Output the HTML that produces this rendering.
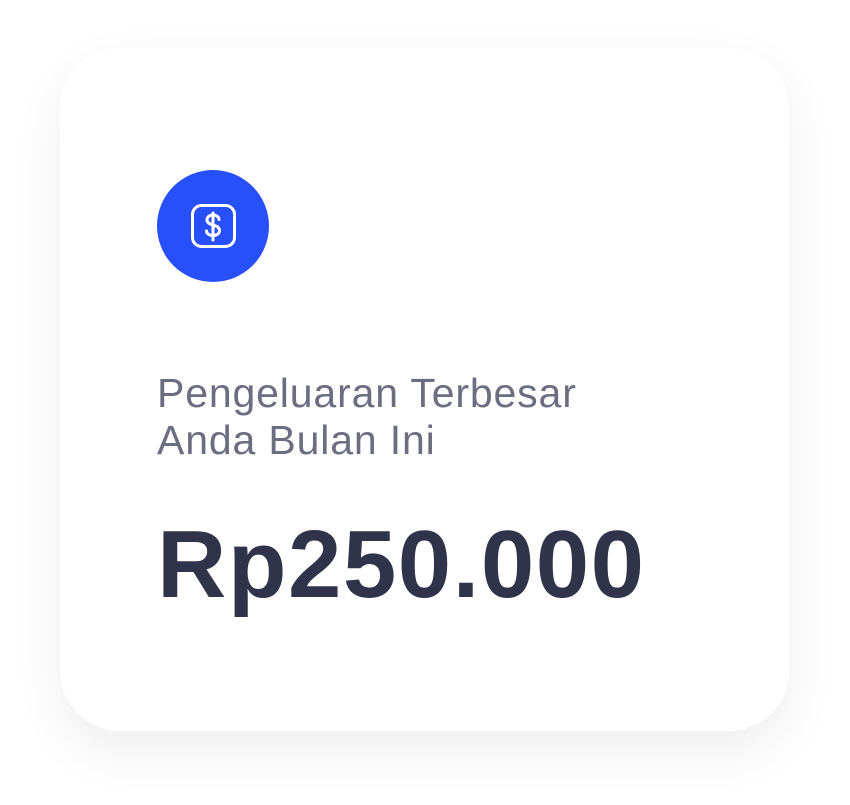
<!DOCTYPE html>
<html><head><style>
html,body{margin:0;width:850px;height:805px;background:#fff;overflow:hidden}
.card{position:absolute;left:60px;top:48px;width:729px;height:683px;border-radius:60px;background:#fff;box-shadow:0 20px 50px rgba(0,0,0,0.07)}
.ic{position:absolute;left:157px;top:170px;width:112px;height:112px;border-radius:50%;background:#2850fa}
.t{position:absolute;left:157px;top:370px;font:300 41px/47px "Liberation Sans",sans-serif;letter-spacing:0.85px;color:#6b6d80;white-space:nowrap}
.v{position:absolute;left:157px;top:510px;font:700 96px/110px "Liberation Sans",sans-serif;letter-spacing:1.5px;color:#30344a;white-space:nowrap}
</style></head><body>
<div class="card"></div>
<div class="ic"><svg width="112" height="112" viewBox="0 0 112 112" fill="none" stroke="#fff" stroke-width="3" stroke-linecap="round">
<rect x="35.5" y="35.5" width="42" height="41" rx="9"/>
<path d="M56 43v27"/>
<path d="M62 49.5c0-2.5-2.6-4.5-6-4.5s-6 2-6 4.8c0 6.5 12.5 4 12.5 10.7 0 3-2.8 5-6.5 5s-6.5-2-6.5-4.5"/>
</svg></div>
<div class="t">Pengeluaran Terbesar<br>Anda Bulan Ini</div>
<div class="v">Rp250.000</div>
</body></html>
